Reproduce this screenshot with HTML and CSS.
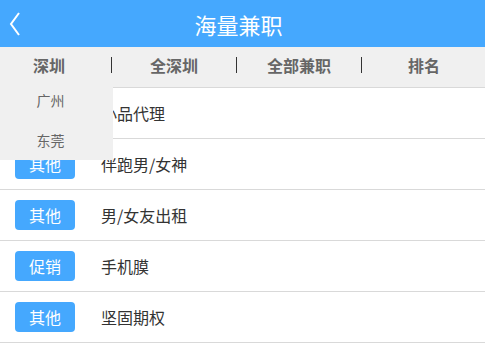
FILE: index.html
```html
<!DOCTYPE html>
<html lang="zh-CN">
<head>
    <meta charset="UTF-8">
    <meta name="viewport" content="width=device-width, initial-scale=1.0">
    <title>海量兼职</title>
    <link rel="stylesheet" href="styles.css">
</head>
<body>
    <div class="page">
        <div class="header">
            <a class="back" href="#">
                <svg width="12" height="24" viewBox="0 0 12 24"><polyline points="10,1 2,12 10,23" fill="none" stroke="#fff" stroke-width="2"/></svg>
            </a>
            <h1>海量兼职</h1>
        </div>

        <div class="tabs">
            <div class="tab-row">
                <div class="tab">深圳</div>
                <div class="tab">全深圳</div>
                <div class="tab">全部兼职</div>
                <div class="tab">排名</div>
            </div>
            <ul class="dropdown">
                <li>广州</li>
                <li>东莞</li>
            </ul>
        </div>

        <ul class="job-list">
            <li class="job"><span class="tag">其他</span><span class="name">小品代理</span></li>
            <li class="job"><span class="tag">其他</span><span class="name">伴跑男/女神</span></li>
            <li class="job"><span class="tag">其他</span><span class="name">男/女友出租</span></li>
            <li class="job"><span class="tag">促销</span><span class="name">手机膜</span></li>
            <li class="job"><span class="tag">其他</span><span class="name">坚固期权</span></li>
        </ul>
    </div>
</body>
</html>
```

FILE: styles.css
```css
body {
    margin: 0;
    font-family: "Noto Sans CJK SC", "Liberation Sans", sans-serif;
    background: #fff;
}
ul {
    list-style: none;
    margin: 0;
    padding: 0;
}
.page {
    position: relative;
    overflow: hidden;
}
.header {
    height: 47px;
    background-color: #45a8fe;
    display: flex;
    align-items: center;
    justify-content: center;
    position: relative;
}
.header h1 {
    margin: 0;
    padding-right: 8px;
    color: #fff;
    font-size: 22px;
    font-weight: normal;
}
.back {
    position: absolute;
    left: 9px;
    top: 12px;
    display: block;
    height: 24px;
}
.tabs {
    position: relative;
    height: 40px;
    background-color: #f0f0f0;
}
.tab-row {
    display: flex;
    width: 499px;
    margin-left: -13px;
    height: 36px;
    align-items: center;
}
.tab {
    flex: 1;
    text-align: center;
    font-size: 16px;
    font-weight: bold;
    color: #666;
    border-right: 1.5px solid #333;
    line-height: 16px;
}
.tab:last-child {
    border-right: none;
}
.dropdown {
    position: absolute;
    left: 0;
    top: 33px;
    width: 113px;
    background-color: #f0f0f0;
    z-index: 2;
}
.dropdown li {
    height: 40px;
    line-height: 40px;
    padding-right: 12px;
    text-align: center;
    font-size: 14px;
    color: #666;
}
.job-list {
    border-top: 1px solid #d9d9d9;
}
.job {
    height: 50px;
    border-bottom: 1px solid #d9d9d9;
    display: flex;
    align-items: center;
    padding-left: 15px;
}
.tag {
    width: 60px;
    height: 30px;
    line-height: 30px;
    border-radius: 4px;
    background-color: #45a8fe;
    color: #fff;
    font-size: 16px;
    text-align: center;
}
.name {
    margin-left: 26px;
    font-size: 16px;
    color: #333;
}
```
